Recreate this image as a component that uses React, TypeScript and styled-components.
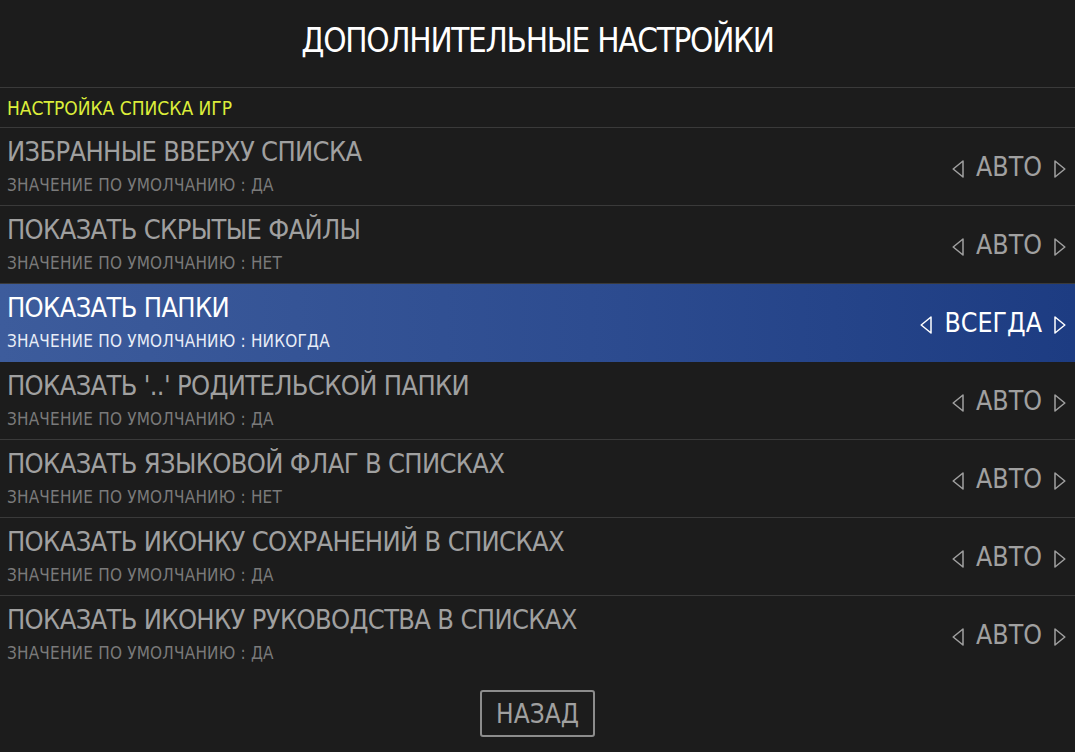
import React from "react";
import styled, { createGlobalStyle } from "styled-components";

const FONT = `"Ubuntu Condensed", "DejaVu Sans Condensed", "Roboto Condensed", "Liberation Sans", sans-serif`;

const Global = createGlobalStyle`
  html, body { margin: 0; padding: 0; background: #1c1c1c; }
  body { font-family: ${FONT}; font-stretch: condensed; }
`;

const Page = styled.div`
  width: 1075px;
  height: 752px;
  background: #1c1c1c;
  display: flex;
  flex-direction: column;
  overflow: hidden;
`;

const Header = styled.header`
  height: 88px;
  display: flex;
  align-items: center;
  justify-content: center;
  padding-bottom: 7px;
  color: #ffffff;
  font-size: 33px;
  letter-spacing: -1.3px;
  border-bottom: 1px solid #3a3a3a;
  box-sizing: border-box;
`;

const Section = styled.div`
  height: 40px;
  display: flex;
  align-items: center;
  padding-left: 7px;
  color: #dcee3a;
  font-size: 19px;
  border-bottom: 1px solid #3a3a3a;
  box-sizing: border-box;
`;

const List = styled.div`
  display: flex;
  flex-direction: column;
`;

const Row = styled.div<{ $selected?: boolean; $last?: boolean }>`
  height: 78px;
  box-sizing: border-box;
  display: flex;
  align-items: stretch;
  justify-content: space-between;
  padding: 0 9px 0 7px;
  border-bottom: 1px solid ${(p) => (p.$last || p.$selected ? "transparent" : "#3a3a3a")};
  background: ${(p) =>
    p.$selected ? "linear-gradient(90deg, #3d5c9c 0%, #2d4c90 55%, #1d3c82 100%)" : "transparent"};
`;

const Texts = styled.div`
  display: flex;
  flex-direction: column;
  padding-top: 9px;
`;

const Title = styled.div<{ $selected?: boolean }>`
  font-size: 27px;
  line-height: 30px;
  letter-spacing: -0.65px;
  color: ${(p) => (p.$selected ? "#ffffff" : "#a0a0a0")};
`;

const Sub = styled.div<{ $selected?: boolean }>`
  margin-top: 6px;
  font-size: 17px;
  line-height: 24px;
  letter-spacing: 0.2px;
  color: ${(p) => (p.$selected ? "#e8edf7" : "#7a7a7a")};
`;

const Value = styled.div<{ $selected?: boolean }>`
  display: flex;
  align-items: center;
  gap: 12px;
  font-size: 26.5px;
  color: ${(p) => (p.$selected ? "#ffffff" : "#a0a0a0")};
  svg { margin-top: 5px; }
`;

const Footer = styled.div`
  flex: 1;
  display: flex;
  justify-content: center;
  align-items: flex-start;
  padding-top: 16px;
`;

const Button = styled.button`
  width: 115px;
  height: 47px;
  box-sizing: border-box;
  border: 2px solid #8c8c8c;
  border-radius: 3px;
  background: transparent;
  color: #a0a0a0;
  font-family: ${FONT};
  font-stretch: condensed;
  font-size: 26px;
  padding: 0;
  display: flex;
  align-items: center;
  justify-content: center;
`;

const Arrow = ({ dir }: { dir: "left" | "right" }) => (
  <svg width="12" height="18" viewBox="0 0 12 18" fill="none">
    <path
      d={dir === "left" ? "M11 1 L1.2 9 L11 17 Z" : "M1 1 L10.8 9 L1 17 Z"}
      stroke="currentColor"
      strokeWidth="1.5"
      strokeLinejoin="round"
    />
  </svg>
);

const items = [
  { t: "ИЗБРАННЫЕ ВВЕРХУ СПИСКА", s: "ЗНАЧЕНИЕ ПО УМОЛЧАНИЮ : ДА", v: "АВТО" },
  { t: "ПОКАЗАТЬ СКРЫТЫЕ ФАЙЛЫ", s: "ЗНАЧЕНИЕ ПО УМОЛЧАНИЮ : НЕТ", v: "АВТО" },
  { t: "ПОКАЗАТЬ ПАПКИ", s: "ЗНАЧЕНИЕ ПО УМОЛЧАНИЮ : НИКОГДА", v: "ВСЕГДА", sel: true },
  { t: "ПОКАЗАТЬ '..' РОДИТЕЛЬСКОЙ ПАПКИ", s: "ЗНАЧЕНИЕ ПО УМОЛЧАНИЮ : ДА", v: "АВТО" },
  { t: "ПОКАЗАТЬ ЯЗЫКОВОЙ ФЛАГ В СПИСКАХ", s: "ЗНАЧЕНИЕ ПО УМОЛЧАНИЮ : НЕТ", v: "АВТО" },
  { t: "ПОКАЗАТЬ ИКОНКУ СОХРАНЕНИЙ В СПИСКАХ", s: "ЗНАЧЕНИЕ ПО УМОЛЧАНИЮ : ДА", v: "АВТО" },
  { t: "ПОКАЗАТЬ ИКОНКУ РУКОВОДСТВА В СПИСКАХ", s: "ЗНАЧЕНИЕ ПО УМОЛЧАНИЮ : ДА", v: "АВТО" },
];

export default function App() {
  return (
    <Page>
      <Global />
      <Header>ДОПОЛНИТЕЛЬНЫЕ НАСТРОЙКИ</Header>
      <Section>НАСТРОЙКА СПИСКА ИГР</Section>
      <List>
        {items.map((it, i) => (
          <Row key={i} $selected={it.sel} $last={i === items.length - 1}>
            <Texts>
              <Title $selected={it.sel}>{it.t}</Title>
              <Sub $selected={it.sel}>{it.s}</Sub>
            </Texts>
            <Value $selected={it.sel}>
              <Arrow dir="left" />
              <span>{it.v}</span>
              <Arrow dir="right" />
            </Value>
          </Row>
        ))}
      </List>
      <Footer>
        <Button>НАЗАД</Button>
      </Footer>
    </Page>
  );
}
